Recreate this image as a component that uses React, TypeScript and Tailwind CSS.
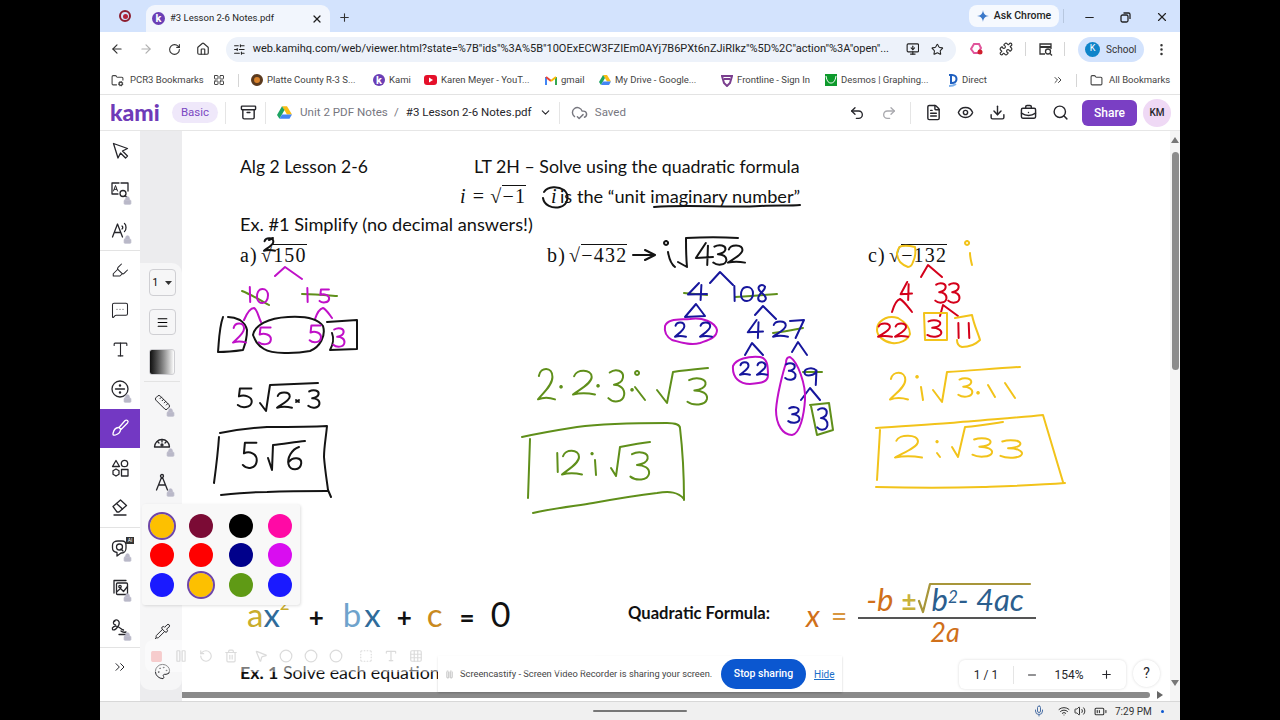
import {
  Archive, ArrowLeft, ArrowRight, BatteryMedium, BriefcaseBusiness, ChevronDown, ChevronsRight, CloudCheck,
  Download, Eye, FileText, Folder, FolderCog, Highlighter, Home, LayoutGrid, Lock, Menu, MessageSquareMore,
  Mic, Minus, MoreVertical, MousePointer2, Palette, Pause, Pipette, Plus, Redo2, RotateCcw, RotateCw, Ruler,
  Search, SlidersHorizontal, Square, Star, Trash2, Type, Undo2, Volume2, Wifi, X, Puzzle, MonitorDown,
  Circle, Grid3x3, SquareDashed,
} from "lucide-react";
import type { ReactNode } from "react";

const ui = "font-['Roboto',sans-serif]";

const Kami = ({ size = "w-[15px] h-[15px]" }: { size?: string }) => (
  <span className={`${size} rounded-full bg-[#6b3fb5] text-white text-[11px] font-bold flex items-center justify-center leading-none shrink-0`}>k</span>
);

const Drive = ({ s = 14 }: { s?: number }) => (
  <svg width={s} height={s} viewBox="0 0 24 22" className="shrink-0">
    <path d="M8 1h8l8 13h-8z" fill="#f9bc15" />
    <path d="M8 1L0 15l4 6 8-14z" fill="#1ea463" />
    <path d="M4 21h16l4-7H8z" fill="#4385f4" />
  </svg>
);

const Ico = ({ children }: { children: ReactNode }) => (
  <svg width="20" height="20" viewBox="0 0 20 20" fill="none" stroke="currentColor" strokeWidth="1.300" strokeLinecap="round" strokeLinejoin="round">
    {children}
  </svg>
);

const bookmarks: { label: string; icon: ReactNode; w: string }[] = [
  { label: "Platte County R-3 S...", w: "w-[122px]", icon: <span className="w-[12px] h-[12px] rounded-full bg-[#d9822b] border-[3px] border-[#5b3a1e] shrink-0" /> },
  { label: "Kami", w: "w-[51px]", icon: <Kami size="w-[12px] h-[12px]" /> },
  { label: "Karen Meyer - YouT...", w: "w-[121px]", icon: (
    <svg width="13" height="10" viewBox="0 0 13 10" className="shrink-0"><rect width="13" height="10" rx="3" fill="#e5102a" /><path d="M5 2.500L9 5 5 7.500z" fill="#fff" /></svg>
  ) },
  { label: "gmail", w: "w-[54px]", icon: (
    <svg width="12" height="10" viewBox="0 0 12 10" className="shrink-0" fill="none" strokeWidth="2"><path d="M1 10V2" stroke="#4285f4" /><path d="M11 10V2" stroke="#34a853" /><path d="M1 2l5 4" stroke="#ea4335" /><path d="M6 6l5-4" stroke="#fbbc05" /></svg>
  ) },
  { label: "My Drive - Google...", w: "w-[122px]", icon: <Drive s={12} /> },
  { label: "Frontline - Sign In", w: "w-[104px]", icon: (
    <svg width="12" height="13" viewBox="0 0 12 13" className="shrink-0" fill="none" stroke="#7a3e8e" strokeWidth="2"><path d="M1 2h10L9 9l-3 3-3-3z" /><path d="M3 5h6" /></svg>
  ) },
  { label: "Desmos | Graphing...", w: "w-[123px]", icon: (
    <span className="w-[12px] h-[12px] bg-[#0d9a2c] shrink-0 flex items-end"><svg width="12" height="12" viewBox="0 0 12 12" fill="none" stroke="#fff" strokeWidth="1"><path d="M1 2c1 6 3 7 5 7s4-1 5-7" /></svg></span>
  ) },
  { label: "Direct", w: "w-[50px]", icon: (
    <svg width="10" height="13" viewBox="0 0 10 13" className="shrink-0" fill="none" stroke="#1f5fbf" strokeWidth="2"><path d="M1 1h3c6 0 6 8 0 8H3V1" /><path d="M1 12c3 0 5-.5 7-2" stroke="#7fb0ea" /></svg>
  ) },
];

const Tool = ({ children, locked, active }: { children: ReactNode; locked?: boolean; active?: boolean }) => (
  <div className={`relative h-[39.5px] flex items-center justify-center shrink-0 ${active ? "bg-[#7338c3] text-white" : "text-[#26262b]"}`}>
    {children}
    {locked && <Lock size={9} className="absolute left-[23px] top-[25px] text-[#b9b8c8] fill-[#b9b8c8]" />}
  </div>
);

const SubTool = ({ children, locked }: { children: ReactNode; locked?: boolean }) => (
  <div className="relative w-full h-[40px] flex items-center justify-center text-[#26262b] shrink-0">
    {children}
    {locked && <Lock size={9} className="absolute left-[22px] top-[26px] text-[#b9b8c8] fill-[#b9b8c8]" />}
  </div>
);

const swatches = [
  { c: "bg-[#fdc000]", ring: true }, { c: "bg-[#7b0b35]" }, { c: "bg-[#000000]" }, { c: "bg-[#ff0aa5]" },
  { c: "bg-[#ff0000]" }, { c: "bg-[#ff0000]" }, { c: "bg-[#00008b]" }, { c: "bg-[#d90df0]" },
  { c: "bg-[#1a1aff]" }, { c: "bg-[#fdc000]", ring: true }, { c: "bg-[#5f9a15]" }, { c: "bg-[#1a1aff]" },
];

const HAND: Record<string, string> = {
  "0": "M.5 0C.1 0 0 .35 0 .55C0 .85 .25 1 .5 1C.8 1 1 .75 1 .45C1 .2 .8 0 .5 0Z",
  "1": "M.45 0L.55 1",
  "2": "M.05 .25C.15 -.05 .85 -.05 .85 .28C.85 .55 .25 .8 0 .98C.35 .9 .7 .92 1 .98",
  "3": "M.1 .08C.45 -.06 .95 .02 .88 .24C.83 .4 .55 .44 .35 .46C.7 .46 1 .58 .95 .78C.88 1.02 .3 1.04 .02 .88",
  "4": "M.6 0L.05 .68L1 .64M.72 .12L.68 1",
  "5": "M.9 .03L.18 .03L.12 .42C.45 .32 .95 .42 .92 .7C.88 1 .3 1.02 .05 .85",
  "6": "M.8 0C.3 .1 0 .5 .1 .75C.2 1.05 .9 1.05 .95 .7C.98 .45 .4 .4 .12 .65",
  "7": "M0 .05L1 0L.4 1",
  "8": "M.75 .1C.5 -.1 .1 .05 .25 .28C.4 .5 .95 .6 .8 .85C.65 1.05 .1 1 .2 .7C.3 .45 .75 .35 .75 .1",
  "9": "M.9 .15C.6 -.1 .05 .05 .1 .3C.15 .5 .8 .5 .9 .15L.85 1",
};

const black = "#141414", magenta = "#c010c8", navy = "#16169c", green = "#5f8f1a", red = "#d4001a", yellow = "#f2c31a";

// [digit, x, y, w, h, colour]
const digits: [string, number, number, number, number, string][] = [
  ["2", 264, 238, 11, 13, black],
  ["1", 248, 287, 4, 15, magenta], ["0", 257, 289, 11, 14, magenta], ["1", 306, 288, 3, 14, magenta], ["5", 319, 289, 11, 14, magenta],
  ["2", 233, 323, 13, 20, magenta], ["5", 258, 327, 14, 18, magenta], ["5", 309, 325, 13, 18, magenta], ["3", 333, 328, 12, 19, magenta],
  ["5", 237, 388, 16, 20, black], ["2", 277, 392, 15, 16, black], ["3", 308, 390, 12, 18, black],
  ["5", 242, 442, 16, 27, black], ["6", 287, 447, 15, 23, black],
  ["4", 695, 243, 18, 22, black], ["3", 713, 245, 14, 20, black], ["2", 728, 245, 17, 18, black],
  ["4", 687, 283, 20, 17, navy], ["1", 733, 286, 3, 15, navy], ["0", 741, 287, 12, 14, navy], ["8", 756, 285, 12, 17, navy],
  ["2", 675, 322, 11, 15, navy], ["2", 700, 322, 12, 15, navy], ["4", 747, 320, 16, 18, navy], ["2", 773, 321, 15, 16, navy], ["7", 790, 320, 14, 18, navy],
  ["2", 740, 362, 10, 13, navy], ["2", 757, 362, 10, 13, navy], ["3", 785, 363, 11, 17, navy], ["9", 803, 368, 15, 17, navy], ["3", 788, 407, 12, 16, navy], ["3", 817, 408, 11, 22, navy],
  ["2", 538, 368, 17, 32, green], ["2", 573, 370, 22, 25, green], ["3", 608, 370, 17, 32, green], ["3", 687, 378, 21, 27, green],
  ["1", 555, 453, 5, 19, green], ["2", 562, 450, 20, 25, green], ["3", 630, 452, 20, 28, green],
  ["4", 900, 282, 12, 18, red], ["3", 935, 283, 12, 20, red], ["3", 948, 283, 12, 20, red],
  ["2", 878, 323, 14, 14, red], ["2", 895, 323, 13, 14, red], ["3", 927, 320, 15, 17, red], ["1", 957, 323, 3, 15, red], ["1", 966, 323, 6, 15, red],
  ["2", 890, 372, 18, 28, yellow], ["3", 958, 378, 15, 19, yellow], ["2", 895, 435, 27, 23, yellow], ["3", 972, 438, 21, 19, yellow], ["3", 1000, 440, 23, 18, yellow],
];

const strokes: [string, string][] = [
  // a)
  [magenta, "M275 276L285 267L302 279M244 320C247 313 250 308 254 308C257 309 258 316 261 322M315 319C317 313 319 309 323 308C326 309 329 314 332 318"],
  [green, "M242 291C250 294 260 300 269 305M302 294C315 294 325 295 337 296"],
  [black, "M223 317C219 328 219 342 218 352C226 352 236 351 243 350C246 342 247 336 247 330C246 325 243 322 240 320C236 318 232 317 228 317"],
  [black, "M253 335C255 325 268 318 288 317C305 316 318 319 323 326C326 336 320 347 310 351C295 354 272 354 264 349C257 345 255 340 253 335"],
  [black, "M327 322L357 320L357 349L330 350C333 345 334 338 332 333"],
  [black, "M260 403L266 411L270 385L318 383"],
  [black, "M296 400L299 402M296 402L299 400"],
  [black, "M220 433C235 430 250 428 267 427C290 427 310 427 327 426C326 437 324 447 324 457C325 470 327 482 328 490L331 497M219 437C218 452 216 468 214 483M221 495C240 493 252 492 267 492C290 491 310 491 327 491"],
  [black, "M268 458L272 470L273 445C283 444 295 442 305 441"],
  [black, "M269 240L273 238"],
  // header circle and underline
  [black, "M544 192C548 186 558 186 564 190C570 195 568 205 560 207C552 209 544 205 543 198"],
  [black, "M654 207C690 204 725 208 760 206C775 205 790 206 800 205"],
  // b)
  [black, "M633 255L653 255M645 250L655 255L645 260M666 241a2 2 0 1 0 .1 0M668 252C669 258 671 264 675 267M678 262L687 267C686 257 686 247 686 238C705 237 722 237 738 238"],
  [navy, "M710 283L720 272L733 285M685 317L696 304L705 316Z M755 315L763 306L776 319M745 355L752 343L763 355M792 352L798 342L807 355M801 400L810 388L820 400"],
  [green, "M684 293C692 294 700 294 707 295M735 297C750 296 765 295 777 294M773 333C783 332 793 330 803 328M803 372L822 372"],
  [magenta, "M665 326C668 318 680 320 690 319C702 317 715 322 717 330C717 338 708 340 700 343C690 346 680 342 672 340C667 337 664 332 665 326"],
  [magenta, "M733 366C736 359 748 356 760 357C767 358 768 365 768 375C768 382 762 383 750 384C740 384 732 378 733 366"],
  [magenta, "M786 363C783 372 777 395 776 410C776 425 783 435 792 435C800 434 804 415 805 400C806 385 798 362 790 357C787 357 786 360 786 363"],
  [green, "M810 405L829 403L833 430L817 435L811 406"],
  [green, "M561 386a.8 .8 0 1 0 .1 0M598 385a.8 .8 0 1 0 .1 0M632 389a.8 .8 0 1 0 .1 0M637 371a2 2 0 1 0 .1 0M635 387L645 400M657 390L667 403L673 372C685 370 697 369 708 368"],
  [green, "M522 437C540 433 558 430 577 427C600 424 640 423 667 423C675 423 680 425 680 428C682 445 684 470 684 500M530 439L528 498M533 513C555 508 575 506 593 503C615 499 640 495 657 493C670 491 678 492 684 499"],
  [green, "M592 453a.7 .7 0 1 0 .1 0M595 460L596 475M611 468L616 476L620 447C630 445 640 443 650 442"],
  // c)
  [yellow, "M897 253C898 249 900 246 902 246C907 245 911 246 915 247C916 253 915 258 913 262C912 265 910 267 908 267C905 266 902 264 900 262C898 259 897 256 897 253"],
  [yellow, "M967 241a2 2 0 1 0 .1 0M970 253C970 257 971 261 972 265"],
  [red, "M921 277L928 265L942 277M892 312C894 305 897 300 900 299C904 301 908 307 912 312M940 316L943 305L958 316"],
  [yellow, "M880 322C885 317 892 316 898 318C905 322 910 328 910 334C908 340 900 344 892 343C884 342 877 336 877 330C877 326 878 324 880 322"],
  [yellow, "M924 313L947 313L947 340L925 340L924 313M955 318L972 315C974 325 978 333 980 340C975 345 968 347 962 347C958 346 957 344 957 340"],
  [yellow, "M917 376a.8 .8 0 1 0 .1 0M921 387L923 400M933 390L942 402L947 372C970 371 995 368 1020 367M978 392a.8 .8 0 1 0 .1 0M988 385L995 397M1005 383L1015 398"],
  [yellow, "M876 428C900 426 925 425 950 423C980 420 1015 418 1043 415L1063 482M880 430C879 447 878 465 877 480M876 487C915 488 950 488 983 487C1010 486 1040 485 1065 483"],
  [yellow, "M937 441a.7 .7 0 1 0 .1 0M937 453L940 457M952 447L958 457L965 427C978 426 990 424 1003 422"],
];

const Sqrt = ({ v }: { v: string }) => (
  <span className="inline-flex items-start">
    <span className="leading-[23px]">√</span>
    <span className="border-t border-[#111] leading-[21px] h-[22px]">{v}</span>
  </span>
);

const doc = "font-['Lato',sans-serif] text-[#111]";
const math = "font-['Liberation_Serif',serif] text-[#111] text-[20px] leading-[23px] tracking-[1.2px]";

export default function App() {
  return (
    <div className={`w-[1280px] h-[720px] bg-black flex justify-center overflow-hidden ${ui}`}>
      <div className="w-[1080px] h-[720px] flex flex-col bg-white">
        {/* tab strip */}
        <div className="h-[32px] bg-[#d3e3fd] flex items-end relative shrink-0">
          <span className="absolute left-[19px] top-[10px] w-[12px] h-[12px] rounded-full border-[2px] border-[#8c1d2f] flex items-center justify-center">
            <span className="w-[5px] h-[5px] rounded-full bg-[#b3233b]" />
          </span>
          <div className="ml-[46px] w-[184px] h-[27px] bg-[#f2f6fd] rounded-t-[9px] flex items-center pl-[6px] pr-[7px] text-[#1f1f1f]">
            <Kami size="w-[13px] h-[13px]" />
            <span className="ml-[5px] text-[9.500px] flex-1 whitespace-nowrap">#3 Lesson 2-6 Notes.pdf</span>
            <X size={12} strokeWidth={2.5} />
          </div>
          <Plus size={13} className="ml-[8px] mb-[8px] text-[#333]" />
          <div className="ml-auto mb-[5px] mr-[4px] h-[22px] w-[90px] rounded-[8px] bg-[#f6f9fe] flex items-center justify-center gap-[5px] text-[10.500px] font-medium text-[#1f1f1f]">
            <svg width="12" height="12" viewBox="0 0 12 12"><path d="M6 0C6.500 4 8 5.500 12 6 8 6.500 6.500 8 6 12 5.500 8 4 6.500 0 6 4 5.500 5.500 4 6 0z" fill="#3b78c9" /></svg>
            Ask Chrome
          </div>
          <div className="w-px h-[14px] bg-[#b7c7df] mb-[9px] mr-[19px]" />
          <div className="flex items-center mb-[8px] mr-[11px] text-[#222]">
            <Minus size={13} />
            <svg width="11" height="11" viewBox="0 0 11 11" fill="none" stroke="currentColor" strokeWidth="1.300" className="ml-[24px]"><rect x="1" y="3" width="7" height="7" rx="1.500" /><path d="M3.500 1H8.500a1.500 1.500 0 0 1 1.500 1.500V7" /></svg>
            <X size={14} className="ml-[24px]" />
          </div>
        </div>

        {/* address bar */}
        <div className="h-[34px] flex items-center shrink-0 text-[#333]">
          <div className="ml-[10px] flex items-center gap-[15px]">
            <ArrowLeft size={14} />
            <ArrowRight size={14} className="text-[#b0b0b0]" />
            <RotateCw size={13} />
            <Home size={14} />
          </div>
          <div className="ml-[16px] w-[730px] h-[25px] rounded-full bg-[#edf2fa] flex items-center pl-[6px] pr-[12px] text-[11px] text-[#222]">
            <SlidersHorizontal size={13} className="ml-[1px]" />
            <span className="ml-[7px] w-[640px] shrink-0 whitespace-nowrap">web.kamihq.com/web/viewer.html?state=%7B"ids"%3A%5B"10OExECW3FZIEm0AYj7B6PXt6nZJiRIkz"%5D%2C"action"%3A"open"...</span>
            <MonitorDown size={14} className="ml-[13px]" />
            <Star size={13} className="ml-[12px]" />
          </div>
          <svg width="14" height="12" viewBox="0 0 14 12" className="ml-[14px]"><path d="M1 6l3-5h5l2 4-3 5H4z" fill="none" stroke="#e0559b" strokeWidth="2" /><circle cx="10" cy="9" r="2.500" fill="#d01f2e" /></svg>
          <Puzzle size={14} className="ml-[15px]" />
          <span className="w-px h-[14px] bg-[#d5d5d5] ml-[12px]" />
          <svg width="15" height="14" viewBox="0 0 15 14" fill="none" stroke="currentColor" strokeWidth="1.300" className="ml-[12px]"><path d="M7 12H2V2h11v5" /><path d="M2 5h11" strokeWidth="2" /><circle cx="10" cy="9.500" r="2.500" /><path d="M12 11.500l2 2" /></svg>
          <span className="w-px h-[14px] bg-[#d5d5d5] ml-[11px]" />
          <div className="ml-[13px] w-[66px] h-[25px] rounded-full bg-[#d3e3fd] flex items-center pl-[7px] text-[10px] text-[#333]">
            <span className="w-[15px] h-[15px] rounded-full bg-[#0f84c9] text-white flex items-center justify-center text-[9px]">K</span>
            <span className="ml-[6px]">School</span>
          </div>
          <MoreVertical size={15} className="ml-[10px]" />
        </div>

        {/* bookmarks */}
        <div className="h-[28px] flex items-center shrink-0 text-[9.500px] text-[#444] whitespace-nowrap">
          <FolderCog size={13} className="ml-[11px]" />
          <span className="ml-[6px] w-[83px]">PCR3 Bookmarks</span>
          <LayoutGrid size={12} />
          <span className="w-px h-[13px] bg-[#d5d5d5] ml-[13px] mr-[12px]" />
          {bookmarks.map((b) => (
            <div key={b.label} className={`flex items-center gap-[4px] ${b.w} shrink-0`}>
              {b.icon}
              <span>{b.label}</span>
            </div>
          ))}
          <ChevronsRight size={12} className="ml-[54px]" />
          <span className="w-px h-[13px] bg-[#d5d5d5] ml-[12px]" />
          <Folder size={13} className="ml-[13px]" />
          <span className="ml-[6px]">All Bookmarks</span>
        </div>
        <div className="h-px bg-[#e3e3e3] shrink-0" />

        {/* kami toolbar */}
        <div className="h-[36px] flex items-center shrink-0 border-b border-[#e6e6e6] text-[#26262b]">
          <span className="ml-[10px] w-[50px] font-['Lato',sans-serif] font-black text-[23px] leading-none text-[#6f3bb8]">kami</span>
          <span className="ml-[12px] w-[46px] h-[21px] rounded-full bg-[#efe8fa] text-[#7b48c2] text-[11.500px] flex items-center justify-center">Basic</span>
          <span className="w-px h-[22px] bg-[#e5e5e5] ml-[7px]" />
          <Archive size={17} className="ml-[14px]" />
          <span className="w-px h-[22px] bg-[#e5e5e5] ml-[8px]" />
          <span className="ml-[11px]"><Drive s={15} /></span>
          <span className="ml-[8px] w-[88px] text-[11.600px] text-[#77777f] whitespace-nowrap">Unit 2 PDF Notes</span>
          <span className="ml-[6px] text-[11.600px] text-[#77777f]">/</span>
          <span className="ml-[7px] w-[126px] text-[11.500px] text-[#26262b] whitespace-nowrap">#3 Lesson 2-6 Notes.pdf</span>
          <ChevronDown size={13} className="ml-[7px]" />
          <span className="w-px h-[22px] bg-[#e5e5e5] ml-[7px]" />
          <CloudCheck size={17} className="ml-[11px] text-[#77777f]" />
          <span className="ml-[7px] text-[11.500px] text-[#77777f]">Saved</span>
          <div className="ml-auto flex items-center">
            <Undo2 size={16} />
            <Redo2 size={16} className="ml-[16px] text-[#a9a9ae]" />
            <span className="w-px h-[22px] bg-[#e5e5e5] ml-[13px]" />
            <FileText size={17} className="ml-[14px]" />
            <Eye size={17} className="ml-[15px]" />
            <Download size={17} className="ml-[15px]" />
            <BriefcaseBusiness size={17} className="ml-[14px]" />
            <Search size={17} className="ml-[15px]" />
            <span className="ml-[13px] w-[55px] h-[26px] rounded-[6px] bg-[#7a3fc4] text-white text-[12px] font-medium flex items-center justify-center">Share</span>
            <span className="ml-[6px] mr-[9px] w-[28px] h-[28px] rounded-full bg-[#efd9f5] text-[10px] font-medium flex items-center justify-center">KM</span>
          </div>
        </div>

        {/* main area */}
        <div className="relative flex h-[570px] shrink-0">
          <div className="w-[40px] flex flex-col bg-white shrink-0">
            <Tool>
              <Ico>
                <path d="M3.500 2.500L8 17l2.500-5 5 5 2-2-5-5 5-2.500z" />
              </Ico>
            </Tool>
            <Tool locked>
              <Ico>
                <path d="M9 3H2v11h6M11 3h7v8" />
                <circle cx="13" cy="13.500" r="3" />
                <path d="M15 15.500L18 18.500" />
                <path d="M3.500 11l2-5.500 2 5.500M4.300 9.300h2.400" strokeWidth="1" />
              </Ico>
            </Tool>
            <Tool locked>
              <Ico>
                <path d="M2.500 17L7.500 4l5 13M4.300 12.500h6.400" />
                <path d="M12 6c1 .7 1 2.300 0 3M14.500 3.500c2 1.500 2 6.500 0 8" />
              </Ico>
            </Tool>
            <div className="h-px bg-[#e3e3e3] shrink-0" />
            <Tool><Highlighter size={18} strokeWidth={1.4} /></Tool>
            <Tool><MessageSquareMore size={18} strokeWidth={1.4} /></Tool>
            <Tool><Type size={19} strokeWidth={1.4} /></Tool>
            <Tool locked>
              <Ico>
                <circle cx="10" cy="10" r="8" />
                <path d="M5.500 10h9" />
                <circle cx="10" cy="6.500" r=".6" fill="currentColor" />
                <circle cx="10" cy="13.500" r=".6" fill="currentColor" />
              </Ico>
            </Tool>
            <Tool active>
              <Ico>
                <path d="M17.500 2.500c-1-.8-2-.3-2.600.3L9 9.500l2 2 6.500-6.500c.7-.8.800-1.800 0-2.500z" />
                <path d="M8.500 9.500c-3 .3-5 3.500-5.500 6-.3 1.700 1 2 2.500 1.500 3-1 5-3.500 5-5.500" />
              </Ico>
            </Tool>
            <Tool>
              <Ico>
                <path d="M6 2.500L9.500 8.500h-7z" />
                <circle cx="14.500" cy="5.500" r="3.200" />
                <path d="M6 11l3 1.800v3.400L6 18l-3-1.800v-3.400z" />
                <rect x="11.500" y="11.500" width="6.500" height="6.500" />
              </Ico>
            </Tool>
            <Tool>
              <Ico>
                <path d="M3 9.500L10.500 3l6 5.500L9 15H7z" />
                <path d="M6.500 6.500l6 5.500" />
                <path d="M4 18h12" />
              </Ico>
            </Tool>
            <div className="h-px bg-[#e3e3e3] shrink-0" />
            <Tool locked>
              <Ico>
                <path d="M8 3h4c3 0 4 2 4 4v3c0 3-2 5-4 5h-1l-4 3v-3.500C4 14 2.500 12.500 2.500 10V7C2.500 4.500 5 3 8 3z" />
                <circle cx="9.500" cy="9" r="3" />
                <path d="M11 11l2 2" />
              </Ico>
              <span className="absolute left-[26px] top-[9px] w-[8px] h-[7px] bg-[#333] text-white text-[5px] leading-[7px] text-center">AI</span>
            </Tool>
            <Tool locked>
              <Ico>
                <path d="M4 16V3.500h12" />
                <rect x="6.500" y="6" width="11" height="11.500" rx="1" />
                <circle cx="10" cy="9.500" r="1.200" />
                <path d="M6.500 15l4-3.500 3 3 4-5" />
              </Ico>
            </Tool>
            <Tool locked>
              <Ico>
                <path d="M4 4c3-2.500 6 0 5 3.500C8 11 4 14 2.500 12.500 1.500 10.500 4.500 8.500 7.500 9.500c2.500.8 4 3 6 3.500" />
                <path d="M5 4C2.500 4.500 3 7.500 5.500 8" />
                <path d="M9 17.500h9M11 14c1 1 3 1.500 5 1" />
              </Ico>
            </Tool>
            <div className="h-px bg-[#e3e3e3] shrink-0" />
            <Tool><ChevronsRight size={16} strokeWidth={1.5} /></Tool>
          </div>

          {/* tool options column */}
          <div className="relative z-10 w-[42px] bg-[#ececee] shrink-0">
            <div className="mt-[132px] h-[427px] bg-[#f6f6f7] rounded-tr-[10px] rounded-b-[10px] flex flex-col items-center pr-[2px] pl-[4px]">
              <div className="mt-[6px] w-[27px] h-[27px] rounded-[4px] border border-[#cfcfd3] flex items-center justify-between px-[3px] text-[10px] shrink-0">
                1<svg width="7" height="4" viewBox="0 0 7 4"><path d="M0 0h7L3.500 4z" fill="#333" /></svg>
              </div>
              <div className="mt-[13px] w-[27px] h-[26px] rounded-[4px] border border-[#cfcfd3] flex items-center justify-center shrink-0"><Menu size={13} /></div>
              <div className="mt-[14px] w-[26px] h-[26px] rounded-[3px] border border-[#cfcfd3] bg-gradient-to-r from-[#111] to-white shrink-0" />
              <div className="mt-[6px] w-full h-px bg-[#e3e3e3] shrink-0" />
              <SubTool locked><Ruler size={17} strokeWidth={1.4} /></SubTool>
              <SubTool locked>
                <Ico>
                  <path d="M2.500 15a7.500 7.500 0 0 1 15 0z" />
                  <path d="M10 7.500V10M5.500 9.500L7 11M14.500 9.500L13 11" />
                  <circle cx="10" cy="13" r="1" />
                </Ico>
              </SubTool>
              <SubTool locked>
                <Ico>
                  <circle cx="10" cy="4" r="1.500" />
                  <path d="M9.500 5.500L4.500 18M10.500 5.500L15.500 18M6.500 13h7" />
                </Ico>
              </SubTool>
              <div className="h-[109px] shrink-0" />
              <SubTool><Pipette size={17} strokeWidth={1.4} /></SubTool>
              <SubTool><Palette size={17} strokeWidth={1.4} /></SubTool>
            </div>
            <div className="absolute left-[2px] top-[373px] w-[158px] h-[101px] bg-[#f8f8f8] rounded-[3px] shadow-[1px_1px_3px_rgba(0,0,0,0.12)] grid grid-cols-[repeat(4,39.5px)] grid-rows-[repeat(3,29.5px)] items-center justify-items-center pt-[7px]">
              {swatches.map((s, i) => (
                <span key={i} className={`w-[24px] h-[24px] rounded-full ${s.c} ${s.ring ? "outline-2 outline-[#6e46a8]" : ""}`} />
              ))}
            </div>
          </div>

          {/* pdf page */}
          <div className="relative flex-1 bg-white overflow-hidden">
            <span className={`${doc} absolute left-[58px] top-[24px] text-[17.5px] leading-[24px] whitespace-nowrap`}>Alg 2 Lesson 2-6</span>
            <span className={`${doc} absolute left-[292px] top-[23px] text-[17.800px] leading-[24px] whitespace-nowrap`}>LT 2H – Solve using the quadratic formula</span>
            <span className={`${math} absolute left-[278px] top-[54px] whitespace-nowrap flex items-start`}><i>i</i><span className="ml-[6px] mr-[5px]">=</span><Sqrt v="−1" /></span>
            <span className={`${math} absolute left-[369px] top-[54px]`}><i>i</i></span>
            <span className={`${doc} absolute left-[378px] top-[53px] text-[18.200px] leading-[24px] whitespace-nowrap`}>is the “unit imaginary number”</span>
            <span className={`${doc} absolute left-[58px] top-[81px] text-[18.200px] leading-[24px] whitespace-nowrap`}>Ex. #1 Simplify (no decimal answers!)</span>
            <span className={`${math} absolute left-[58px] top-[113px] flex gap-[3px]`}>a) <Sqrt v="150" /></span>
            <span className={`${math} absolute left-[365px] top-[113px] flex gap-[3px]`}>b) <Sqrt v="−432" /></span>
            <span className={`${math} absolute left-[686px] top-[113px] flex gap-[3px]`}>c) <Sqrt v="−132" /></span>

            <div className="absolute left-[65px] top-[464px] flex items-baseline font-['Lato',sans-serif] text-[33px] leading-[38px] whitespace-nowrap">
              <span className="text-[#c9ad2c]">a</span><span className="text-[#2f6b9a]">x</span>
              <span className="text-[#c9ad2c] text-[17px] relative -top-[17px]">2</span>
              <span className="ml-[19px] text-[#111] font-bold text-[26px]">+</span>
              <span className="ml-[19px] text-[#6fa3cc]">b</span><span className="ml-[3px] text-[#2f6b9a]">x</span>
              <span className="ml-[16px] text-[#111] font-bold text-[26px]">+</span>
              <span className="ml-[15px] text-[#c98a1e]">c</span>
              <span className="ml-[17px] text-[#111] font-bold text-[26px]">=</span>
              <span className="ml-[16px] text-[#111] text-[34px]">0</span>
            </div>
            <span className={`${doc} absolute left-[446px] top-[471px] text-[16.600px] font-bold leading-[22px] whitespace-nowrap`}>Quadratic Formula:</span>

            <span className="absolute left-[624px] top-[466px] font-['Lato',sans-serif] italic text-[#d0701a] text-[30px] leading-[36px]">x</span>
            <span className="absolute left-[649px] top-[466px] font-['Lato',sans-serif] text-[#d8963f] text-[28px] leading-[36px]">=</span>
            <div className="absolute left-[676px] top-[449px] w-[178px] flex flex-col items-center font-['Lato',sans-serif] italic text-[31px] leading-[38px]">
              <div className="flex items-baseline whitespace-nowrap h-[37px] -ml-[4px]">
                <span className="text-[#d0701a]">-b</span>
                <span className="ml-[8px] not-italic text-[#c9b23a] font-bold text-[26px]">±</span>
                <span className="ml-[15px] text-[#2b5e8e]">b<sup className="text-[17px]">2</sup>- 4ac</span>
              </div>
              <div className="w-full h-[2px] bg-[#555]" />
              <div className="text-[#d0701a] -ml-[4px] -mt-[2px] text-[27px] leading-[30px]">2a</div>
            </div>
            <span className={`${doc} absolute left-[58px] top-[529px] text-[17.800px] leading-[24px] whitespace-nowrap`}><b>Ex. 1</b> Solve each equation</span>

            {/* handwriting ink */}
            <svg width="988" height="570" viewBox="182 131 988 570" className="absolute left-0 top-0" fill="none" strokeLinecap="round" strokeLinejoin="round">
              {strokes.map(([c, d], i) => <path key={i} d={d} stroke={c} strokeWidth="2" />)}
              {digits.map(([ch, x, y, w, h, c], i) => (
                <path key={i} d={HAND[ch]} stroke={c} strokeWidth="2" vectorEffect="non-scaling-stroke" transform={`translate(${x} ${y}) scale(${w} ${h})`} />
              ))}
              <path d="M919 601L923 612L930 584L1030 584" stroke="#a8963a" strokeWidth="2.200" />
            </svg>

            {/* screencastify bar */}
            <div className="absolute z-10 left-[256px] top-[525px] w-[404px] h-[36px] bg-white shadow-[0_1px_2px_rgba(0,0,0,0.2)] flex items-center text-[9.300px] text-[#444] whitespace-nowrap">
              <Pause size={9} className="ml-[7px] text-[#aaa]" />
              <span className="ml-[6px] w-[261px]">Screencastify - Screen Video Recorder is sharing your screen.</span>
              <span className="w-[85px] h-[30px] rounded-full bg-[#0b57d0] text-white text-[10.500px] font-medium flex items-center justify-center">Stop sharing</span>
              <span className="ml-[8px] text-[10px] text-[#1a6ec9] underline">Hide</span>
            </div>

            {/* page controls */}
            <div className="absolute left-[777px] top-[529px] w-[167px] h-[29px] bg-white rounded-[6px] shadow-[0_0_3px_rgba(0,0,0,0.15)] flex items-center text-[12px] text-[#26262b]">
              <span className="w-[55px] text-center border-r border-[#e5e5e5]">1 / 1</span>
              <Minus size={12} className="ml-[12px]" />
              <span className="w-[50px] text-center ml-[6px]">154%</span>
              <Plus size={13} className="ml-[6px]" />
            </div>
            <div className="absolute left-[951px] top-[529px] w-[27px] h-[27px] rounded-full bg-white shadow-[0_0_3px_rgba(0,0,0,0.15)] flex items-center justify-center text-[14px] text-[#26262b]">?</div>
            <span className="absolute left-[975px] top-[560px] w-0 h-0 border-y-[4px] border-y-transparent border-l-[6px] border-l-[#666]" />
          </div>

          {/* faded recorder toolbar, over the panels */}
          <div className="absolute z-20 left-[45px] top-[509px] w-[450px] h-[32px] bg-white/45 rounded-[8px] flex items-center gap-[11px] pl-[5px] text-[#8a8a8a] [&>svg]:opacity-30">
            <Square size={13} className="fill-[#e66] text-[#e66]" />
            <Pause size={14} />
            <RotateCcw size={14} />
            <Trash2 size={14} />
            <MousePointer2 size={14} className="ml-[5px]" />
            <Circle size={14} />
            <Circle size={14} />
            <Circle size={14} />
            <SquareDashed size={14} className="ml-[5px]" />
            <Type size={14} />
            <Grid3x3 size={14} />
          </div>

          {/* vertical scrollbar */}
          <div className="w-[10px] bg-[#f5f5f5] shrink-0 flex flex-col items-center">
            <span className="mt-[6px] w-0 h-0 border-x-[4px] border-x-transparent border-b-[6px] border-b-[#777]" />
            <span className="mt-[9px] w-[7px] h-[218px] rounded-full bg-[#8c8c8c]" />
            <span className="mt-auto mb-[15px] w-0 h-0 border-x-[4px] border-x-transparent border-t-[6px] border-t-[#777]" />
          </div>
          <div className="absolute left-[40px] top-[561px] w-[1010px] h-[6px] rounded-r-full bg-[#8a8a8a]" />
        </div>

        {/* taskbar */}
        <div className="relative flex-1 bg-[#f0f0f0] border-t border-[#d8d8d8] flex items-center text-[#333]">
          <span className="absolute left-[493px] top-[8px] w-[94px] h-[2px] rounded-full bg-[#777]" />
          <Mic size={12} className="ml-[933px] text-[#4a6fa5]" />
          <Wifi size={12} className="ml-[13px]" />
          <Volume2 size={12} className="ml-[4px]" />
          <BatteryMedium size={13} className="ml-[8px]" />
          <span className="ml-[8px] text-[10px] whitespace-nowrap">7:29 PM</span>
          <span className="ml-[9px] w-[3px] h-[3px] rounded-full bg-[#0b57d0]" />
        </div>
      </div>
    </div>
  );
}
